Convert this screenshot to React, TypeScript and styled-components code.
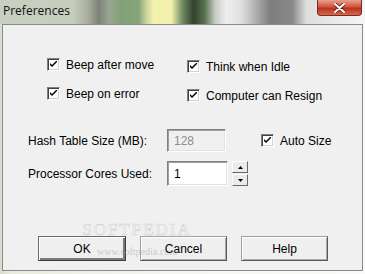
import styled, { createGlobalStyle } from "styled-components";

const GlobalStyle = createGlobalStyle`
  html, body {
    margin: 0;
    padding: 0;
    background: #ffffff;
  }
`;

const Frame = styled.div`
  width: 365px;
  height: 274px;
  box-sizing: border-box;
  display: flex;
  flex-direction: column;
  background: linear-gradient(90deg, #d8dccf 0%, #e9ecdc 3%, #f4f4f0 40%, #fafafa 100%);
  padding: 0 2px 3px 2px;
  font-family: "Liberation Sans", Arial, sans-serif;
  font-size: 12px;
  color: #000;
  overflow: hidden;
`;

const TitleBar = styled.div`
  height: 24px;
  margin: 0 -2px;
  display: flex;
  align-items: flex-start;
  justify-content: space-between;
  background: linear-gradient(
    90deg,
    #c9d0c2 0%,
    #c5cdbd 20%,
    #a9ae9f 24%,
    #7f8279 27%,
    #9aa592 30%,
    #82a076 33%,
    #86a57c 38%,
    #c9d29a 40%,
    #f4f2b0 42%,
    #f2f0ac 47%,
    #6f8a62 50%,
    #34422f 53%,
    #56704c 56%,
    #c8ccc4 59%,
    #eeeeee 62%,
    #e0e0e0 66%,
    #b0b0b0 70%,
    #7e7e7e 74%,
    #888888 80%,
    #dedede 84%,
    #f6f6f6 100%
  );
`;

const Title = styled.span`
  font-family: "Open Sans", "Noto Sans", sans-serif;
  font-size: 12px;
  color: #111;
  padding: 2px 0 0 3px;
  line-height: 18px;
`;

const CloseButton = styled.div`
  width: 45px;
  height: 16px;
  margin-right: 3px;
  box-sizing: border-box;
  border: 1px solid #7a2a20;
  border-top: none;
  border-radius: 0 0 4px 4px;
  background: linear-gradient(180deg, #e8a090 0%, #d0553f 45%, #c0301c 55%, #d06a50 100%);
  display: flex;
  align-items: center;
  justify-content: center;
`;

const Client = styled.div`
  flex: 1;
  box-sizing: border-box;
  border: 1px solid #8a8a8a;
  background: #f0f0f0;
  padding: 33px 0 0 0;
  display: flex;
  flex-direction: column;
  position: relative;
`;

const Options = styled.div`
  display: flex;
  padding-left: 44px;
`;

const OptionColumn = styled.div<{ $width: number; $top: number }>`
  width: ${(p) => p.$width}px;
  padding-top: ${(p) => p.$top}px;
  display: flex;
  flex-direction: column;
  gap: 16px;
`;

const CheckRow = styled.label`
  display: flex;
  align-items: center;
  height: 13px;
  white-space: nowrap;
`;

const Box = styled.span`
  width: 13px;
  height: 13px;
  box-sizing: border-box;
  border: 1px solid;
  border-color: #808080 #ffffff #ffffff #808080;
  box-shadow: inset 1px 1px 0 #404040, inset -1px -1px 0 #d4d0c8;
  background: #ffffff;
  margin-right: 6px;
  display: flex;
  align-items: center;
  justify-content: center;
  flex-shrink: 0;
`;

const Check = () => (
  <Box>
    <svg width="7" height="7" viewBox="0 0 7 7">
      <path d="M0 2 L0 4 L2 6 L7 1 L7 -1 L2 4 Z" fill="#000" />
    </svg>
  </Box>
);

const Checkbox = ({ label }: { label: string }) => (
  <CheckRow>
    <Check />
    {label}
  </CheckRow>
);

const FieldRow = styled.div<{ $top: number }>`
  display: flex;
  align-items: center;
  margin-top: ${(p) => p.$top}px;
  padding-left: 25px;
`;

const FieldLabel = styled.span`
  width: 139px;
  white-space: nowrap;
`;

const TextBox = styled.div<{ $disabled?: boolean; $w: number; $h: number }>`
  width: ${(p) => p.$w}px;
  height: ${(p) => p.$h}px;
  box-sizing: border-box;
  border: 1px solid;
  border-color: #808080 #ffffff #ffffff #808080;
  box-shadow: inset 1px 1px 0 #a0a0a0, inset -1px -1px 0 #e3e3e3;
  background: ${(p) => (p.$disabled ? "#f0f0f0" : "#ffffff")};
  color: ${(p) => (p.$disabled ? "#8c8c8c" : "#000")};
  padding-left: 6px;
  display: flex;
  align-items: center;
`;

const AutoSize = styled.div`
  margin-left: 35px;
`;

const Spinner = styled.div`
  width: 16px;
  height: 25px;
  margin-left: 4px;
  display: flex;
  flex-direction: column;
  gap: 1px;
`;

const SpinHalf = styled.div`
  flex: 1;
  box-sizing: border-box;
  border: 1px solid;
  border-color: #ffffff #696969 #696969 #ffffff;
  background: #ebebeb;
  display: flex;
  align-items: center;
  justify-content: center;
`;

const Arrow = ({ up }: { up?: boolean }) => (
  <svg width="5" height="3" viewBox="0 0 5 3">
    <path d={up ? "M2.5 0 L5 3 L0 3 Z" : "M0 0 L5 0 L2.5 3 Z"} fill="#000" />
  </svg>
);

const Buttons = styled.div`
  display: flex;
  gap: 14px;
  padding-left: 35px;
  margin-top: 50px;
`;

const Button = styled.div<{ $default?: boolean; $w: number }>`
  width: ${(p) => p.$w}px;
  height: 25px;
  box-sizing: border-box;
  border: 1px solid;
  border-color: ${(p) =>
    p.$default ? "#6a6a6a #3c3c3c #3c3c3c #6a6a6a" : "#a0a0a0 #5a5a5a #5a5a5a #a0a0a0"};
  box-shadow: ${(p) =>
    p.$default
      ? "inset 1px 1px 0 #ffffff, inset -2px -2px 0 #7a7a7a"
      : "inset 1px 1px 0 #ffffff, inset -1px -1px 0 #a8a8a8"};
  background: #efefef;
  display: flex;
  align-items: center;
  justify-content: center;
  font-size: 12px;
`;

const Watermark = styled.div`
  position: absolute;
  left: 72px;
  top: 197px;
  width: 124px;
  display: flex;
  flex-direction: column;
  align-items: center;
  pointer-events: none;
`;

const WatermarkBig = styled.span`
  font-family: "Liberation Serif", serif;
  font-size: 17px;
  line-height: 15px;
  letter-spacing: 2px;
  color: rgba(255, 255, 255, 0.35);
  -webkit-text-stroke: 0.6px rgba(185, 185, 185, 0.55);
`;

const WatermarkSmall = styled.span`
  font-family: "Liberation Serif", serif;
  font-size: 10px;
  line-height: 10px;
  margin-top: 10px;
  color: rgba(140, 140, 140, 0.4);
`;

export default function App() {
  return (
    <>
      <GlobalStyle />
      <Frame>
        <TitleBar>
          <Title>Preferences</Title>
          <CloseButton>
            <svg width="11" height="10" viewBox="0 0 11 10">
              <path
                d="M1 1 L10 9 M10 1 L1 9"
                stroke="#5a1a10"
                strokeWidth="3.4"
                strokeLinecap="round"
              />
              <path
                d="M1 1 L10 9 M10 1 L1 9"
                stroke="#ffffff"
                strokeWidth="2"
                strokeLinecap="round"
              />
            </svg>
          </CloseButton>
        </TitleBar>
        <Client>
          <Options>
            <OptionColumn $width={140} $top={0}>
              <Checkbox label="Beep after move" />
              <Checkbox label="Beep on error" />
            </OptionColumn>
            <OptionColumn $width={160} $top={2}>
              <Checkbox label="Think when Idle" />
              <Checkbox label="Computer can Resign" />
            </OptionColumn>
          </Options>
          <FieldRow $top={27}>
            <FieldLabel>Hash Table Size (MB):</FieldLabel>
            <TextBox $disabled $w={59} $h={23}>
              128
            </TextBox>
            <AutoSize>
              <Checkbox label="Auto Size" />
            </AutoSize>
          </FieldRow>
          <FieldRow $top={9}>
            <FieldLabel>Processor Cores Used:</FieldLabel>
            <TextBox $w={61} $h={25}>
              1
            </TextBox>
            <Spinner>
              <SpinHalf>
                <Arrow up />
              </SpinHalf>
              <SpinHalf>
                <Arrow />
              </SpinHalf>
            </Spinner>
          </FieldRow>
          <Buttons>
            <Button $default $w={88}>
              OK
            </Button>
            <Button $w={87}>Cancel</Button>
            <Button $w={87}>Help</Button>
          </Buttons>
          <Watermark>
            <WatermarkBig>SOFTPEDIA</WatermarkBig>
            <WatermarkSmall>www.softpedia.com</WatermarkSmall>
          </Watermark>
        </Client>
      </Frame>
    </>
  );
}
